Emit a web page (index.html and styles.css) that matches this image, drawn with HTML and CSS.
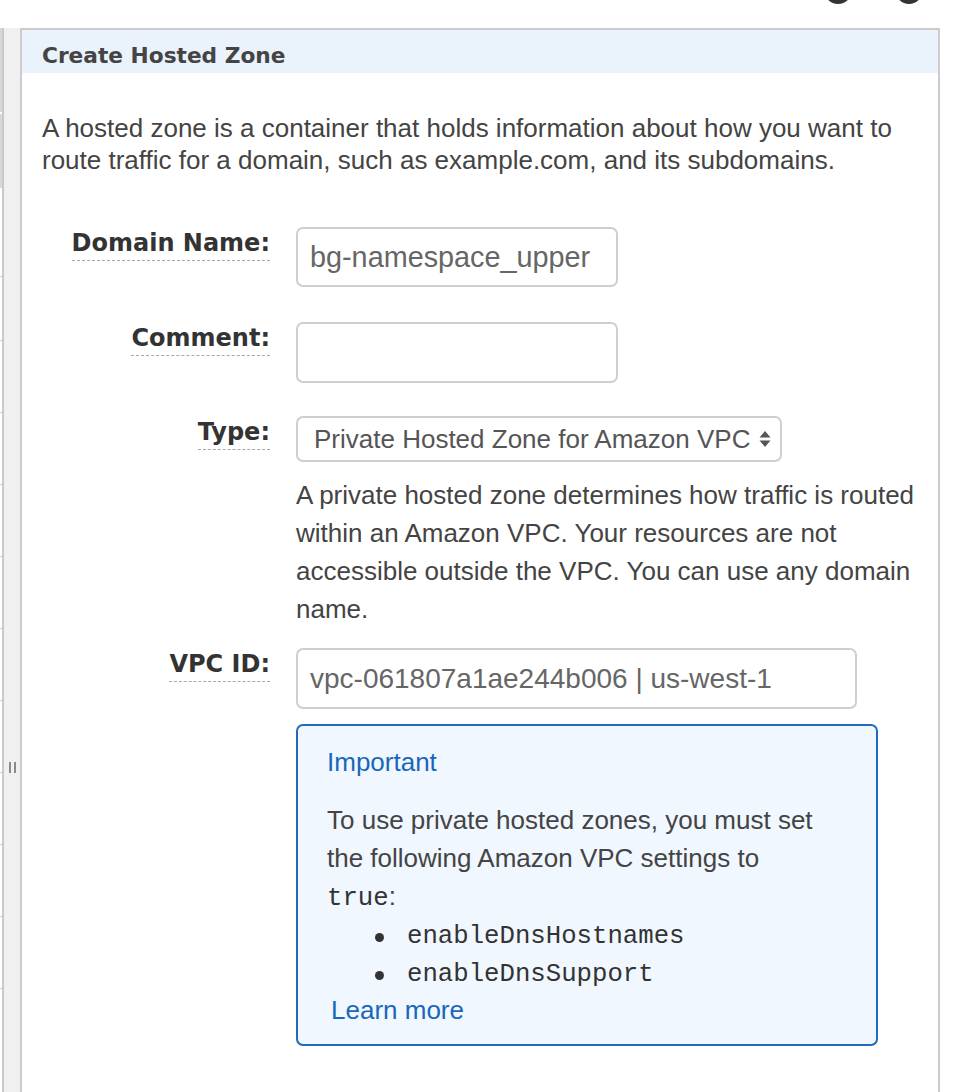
FILE: index.html
```html
<!DOCTYPE html>
<html lang="en">
<head>
<meta charset="utf-8">
<title>Create Hosted Zone</title>
<link rel="stylesheet" href="styles.css">
</head>
<body>
<div class="top">
  <span class="ico ico-a"></span>
  <span class="ico ico-b"></span>
</div>
<div class="main">
  <aside class="side">
    <div class="sliver">
      <div class="blk blk-1"></div>
      <div class="blk blk-2"></div>
      <div class="cell cell-a"></div>
      <div class="cell cell-b"></div>
      <div class="cell"></div>
      <div class="cell"></div>
      <div class="cell"></div>
      <div class="cell"></div>
      <div class="cell"></div>
      <div class="cell"></div>
      <div class="cell"></div>
      <div class="cell"></div>
      <div class="cell"></div>
    </div>
    <div class="side-line"></div>
    <div class="strip"><span class="grip"></span></div>
  </aside>
  <section class="panel">
    <header class="panel-head"><h1 class="title">Create Hosted Zone</h1></header>
    <div class="panel-body">
      <p class="intro">A hosted zone is a container that holds information about how you want to route traffic for a domain, such as example.com, and its subdomains.</p>
      <div class="form">
        <div class="row row-domain">
          <div class="lbl-col"><span class="lbl">Domain Name:</span></div>
          <div class="fld-col"><input class="inp inp-domain" type="text" value="bg-namespace_upper" readonly></div>
        </div>
        <div class="row row-comment">
          <div class="lbl-col"><span class="lbl">Comment:</span></div>
          <div class="fld-col"><input class="inp inp-comment" type="text" value="" readonly></div>
        </div>
        <div class="row row-type">
          <div class="lbl-col"><span class="lbl">Type:</span></div>
          <div class="fld-col">
            <div class="select">
              <span class="select-text">Private Hosted Zone for Amazon VPC</span>
              <svg class="select-arrows" width="12" height="18" viewBox="0 0 12 18"><path d="M6 1 L11.5 7.5 H0.5 Z" fill="#555"/><path d="M6 17 L11.5 10.5 H0.5 Z" fill="#555"/></svg>
            </div>
            <p class="hint">A private hosted zone determines how traffic is routed within an Amazon VPC. Your resources are not accessible outside the VPC. You can use any domain name.</p>
          </div>
        </div>
        <div class="row row-vpc">
          <div class="lbl-col"><span class="lbl">VPC ID:</span></div>
          <div class="fld-col">
            <input class="inp inp-vpc" type="text" value="vpc-061807a1ae244b006 | us-west-1" readonly>
            <div class="notice">
              <div class="notice-title">Important</div>
              <p class="notice-text">To use private hosted zones, you must set the following Amazon VPC settings to <code>true</code>:</p>
              <ul class="notice-list">
                <li><code>enableDnsHostnames</code></li>
                <li><code>enableDnsSupport</code></li>
              </ul>
              <a class="learn" href="#">Learn more</a>
            </div>
          </div>
        </div>
      </div>
    </div>
  </section>
</div>
</body>
</html>
```

FILE: styles.css
```css
html, body {
  margin: 0;
  padding: 0;
  background: #fff;
}
body {
  font-family: "Liberation Sans", Arial, sans-serif;
  color: #444;
  height: 1092px;
  overflow: hidden;
}

/* top strip with cut-off icons */
.top {
  height: 28px;
  display: flex;
  justify-content: flex-end;
  padding-right: 38px;
  gap: 44px;
  overflow: hidden;
}
.ico {
  display: block;
  border-radius: 50%;
  background: #333;
}
.ico-a {
  width: 28px;
  height: 28px;
  margin-top: -24px;
}
.ico-b {
  width: 26px;
  height: 26px;
  margin-top: -22px;
}

.main {
  display: flex;
  height: 1064px;
}

/* left sidebar remnant */
.side {
  flex: 0 0 20px;
  display: flex;
}
.sliver {
  width: 2px;
  display: flex;
  flex-direction: column;
}
.blk {
  background: #d8d8d8;
}
.blk-1 {
  height: 84px;
}
.blk-2 {
  height: 74px;
  margin-top: 2px;
}
.cell {
  height: 71px;
  border-bottom: 1px solid #cfcfcf;
  flex: 0 0 auto;
}
.cell-a {
  height: 88px;
}
.cell-b {
  height: 63px;
}
.side-line {
  width: 2px;
  background: #c9c9c9;
}
.strip {
  flex: 1;
  background: #f0f0f0;
}
.grip {
  display: block;
  width: 3px;
  height: 11px;
  margin: 734px 0 0 5px;
  border-left: 2px solid #8a8a8a;
  border-right: 2px solid #8a8a8a;
}

/* panel */
.panel {
  flex: 0 0 916px;
  border: 2px solid #cccccc;
  border-bottom: none;
}
.panel-head {
  height: 43px;
  background: #eaf2fc;
  padding: 7px 20px 0;
  display: flex;
  align-items: center;
  box-sizing: border-box;
}
.title {
  margin: 0;
  font-family: "DejaVu Sans", Verdana, sans-serif;
  font-weight: bold;
  font-size: 21.7px;
  color: #444;
}
.panel-body {
  padding: 39px 20px 0 20px;
}
.intro {
  margin: 0;
  font-size: 26px;
  line-height: 32px;
  color: #444;
  max-width: 880px;
}

/* form */
.form {
  margin-top: 51px;
  display: flex;
  flex-direction: column;
}
.row {
  display: flex;
  gap: 26px;
}
.row-comment {
  margin-top: 35px;
}
.row-type {
  margin-top: 33px;
}
.row-vpc {
  margin-top: 20px;
}
.lbl-col {
  flex: 0 0 228px;
  text-align: right;
}
.lbl {
  display: inline-block;
  font-family: "DejaVu Sans", Verdana, sans-serif;
  font-weight: bold;
  font-size: 24px;
  line-height: 33px;
  color: #333;
  border-bottom: 1px dashed #a8a8a8;
}
.fld-col {
  flex: 1;
  display: flex;
  flex-direction: column;
  align-items: flex-start;
}
.inp {
  box-sizing: border-box;
  height: 61px;
  border: 2px solid #cfcfcf;
  border-radius: 7px;
  padding: 0 12px;
  font-family: "Liberation Sans", Arial, sans-serif;
  font-size: 28px;
  color: #666;
  background: #fff;
  outline: none;
}
.inp-domain {
  width: 322px;
  height: 60px;
  font-size: 28.8px;
}
.inp-comment {
  width: 322px;
}
.inp-vpc {
  width: 561px;
}

.select {
  box-sizing: border-box;
  width: 486px;
  height: 46px;
  border: 2px solid #cfcfcf;
  border-radius: 7px;
  display: flex;
  align-items: center;
  padding: 0 9px 0 16px;
  justify-content: space-between;
}
.select-text {
  font-size: 26px;
  color: #555;
}
.select-arrows {
  display: block;
}
.hint {
  margin: 14px 0 0;
  max-width: 640px;
  font-size: 26px;
  line-height: 38px;
  color: #444;
}

/* important notice */
.notice {
  box-sizing: border-box;
  width: 582px;
  margin-top: 15px;
  border: 2px solid #1f6bbd;
  border-radius: 7px;
  background: #f0f7ff;
  padding: 17px 52px 18px 29px;
}
.notice-title {
  font-size: 26px;
  line-height: 38px;
  color: #1a67b9;
}
.notice-text {
  margin: 20px 0 0;
  font-size: 26px;
  line-height: 38px;
  color: #444;
}
code {
  font-family: "Liberation Mono", "Courier New", monospace;
  font-size: 25.7px;
  color: #333;
}
.notice-list {
  list-style: none;
  margin: 0;
  padding: 0;
}
.notice-list li {
  display: flex;
  align-items: center;
  gap: 23px;
  line-height: 38px;
  margin-left: 48px;
}
.notice-list li::before {
  content: "";
  width: 9px;
  height: 9px;
  border-radius: 50%;
  background: #333;
  flex: 0 0 9px;
}
.learn {
  display: block;
  margin: 0 0 0 4px;
  font-size: 26px;
  line-height: 32px;
  color: #1a67b9;
  text-decoration: none;
}
```
